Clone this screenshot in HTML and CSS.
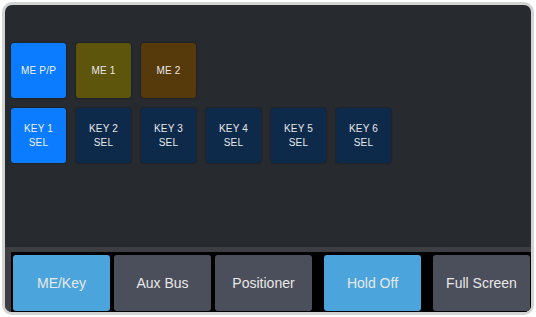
FILE: index.html
```html
<!DOCTYPE html>
<html>
<head>
<meta charset="utf-8">
<link rel="stylesheet" href="styles.css">
</head>
<body>
<div class="frame">
  <div class="pads">
    <div class="row">
      <div class="pad blue">ME P/P</div>
      <div class="pad olive">ME 1</div>
      <div class="pad brown">ME 2</div>
    </div>
    <div class="row">
      <div class="pad blue">KEY 1<br>SEL</div>
      <div class="pad navy">KEY 2<br>SEL</div>
      <div class="pad navy">KEY 3<br>SEL</div>
      <div class="pad navy">KEY 4<br>SEL</div>
      <div class="pad navy">KEY 5<br>SEL</div>
      <div class="pad navy">KEY 6<br>SEL</div>
    </div>
  </div>
  <div class="bottombar">
    <div class="tabs">
      <div class="tab active">ME/Key</div>
      <div class="tab">Aux Bus</div>
      <div class="tab">Positioner</div>
      <div class="tab active sep">Hold Off</div>
      <div class="tab sep">Full Screen</div>
    </div>
  </div>
</div>
</body>
</html>
```

FILE: styles.css
```css
html, body {
  margin: 0;
  padding: 0;
  background: #ffffff;
}
body {
  width: 536px;
  height: 317px;
  overflow: hidden;
  font-family: "Liberation Sans", Arial, sans-serif;
}
.frame {
  box-sizing: border-box;
  margin: 2px 0 0 2px;
  width: 532px;
  height: 313px;
  border: 3px solid #d3d3d3;
  border-radius: 10px;
  background: #272a2f;
  display: flex;
  flex-direction: column;
  overflow: hidden;
}
.pads {
  padding: 38px 0 0 6px;
  display: flex;
  flex-direction: column;
  gap: 10px;
}
.row {
  display: flex;
  gap: 10px;
}
.pad {
  width: 55px;
  height: 55px;
  border-radius: 3px;
  box-shadow: 0 0 2px rgba(0, 0, 0, 0.6);
  display: flex;
  align-items: center;
  justify-content: center;
  text-align: center;
  color: #e8e8e8;
  font-size: 10px;
  line-height: 14px;
  letter-spacing: 0.2px;
}
.blue { background: #0b7bff; color: #f2f2f2; }
.olive { background: #5e550d; }
.brown { background: #573a0c; }
.navy { background: #0e2a4b; }
.bottombar {
  margin-top: auto;
  height: 65px;
  box-sizing: border-box;
  padding: 5px 0 0 6px;
  background: #3c3e43;
}
.tabs {
  height: 60px;
  box-sizing: border-box;
  padding: 3px 0 1px 2px;
  background: #000000;
  display: flex;
  gap: 4px;
}
.tab {
  width: 97px;
  height: 56px;
  flex: none;
  border-radius: 3px;
  background: #4b4f5b;
  color: #e8e8e8;
  font-size: 14px;
  display: flex;
  align-items: center;
  justify-content: center;
}
.tab.active {
  background: #4ba5dc;
}
.tab.sep {
  margin-left: 8px;
}
```
